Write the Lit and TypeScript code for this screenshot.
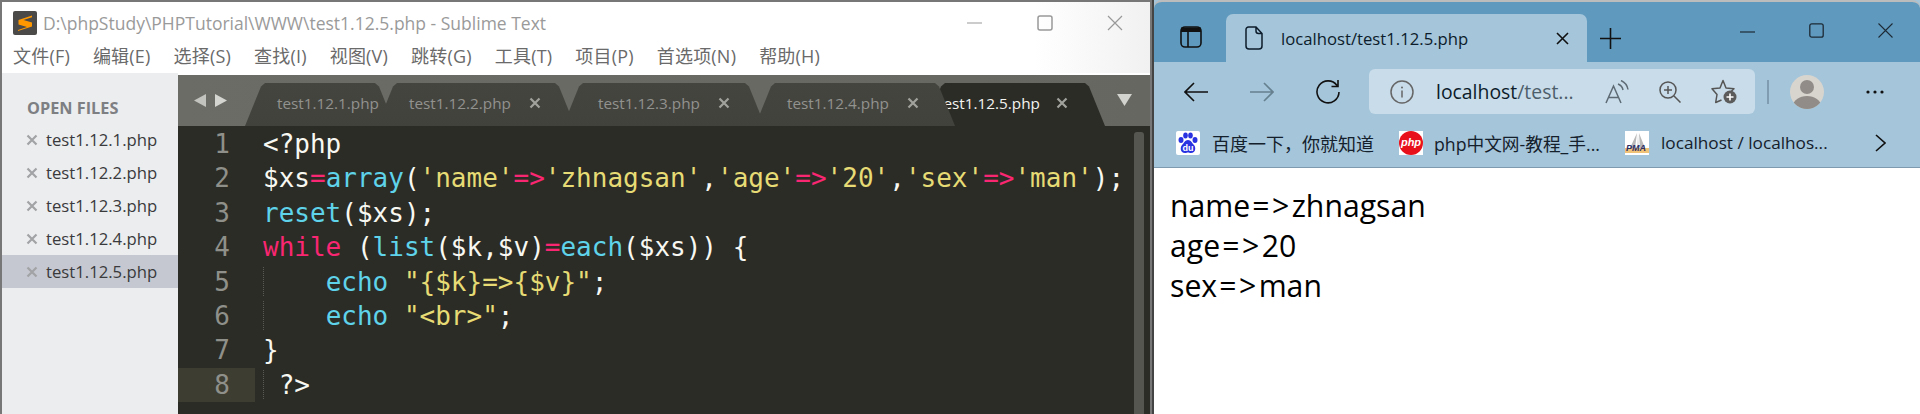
import { LitElement, html, css } from "lit";
import { customElement } from "lit/decorators.js";

const files = ["test1.12.1.php", "test1.12.2.php", "test1.12.3.php", "test1.12.4.php", "test1.12.5.php"];

const x = (size: number, cls = "") => html`<svg class=${cls} width=${size} height=${size} viewBox="0 0 12 12"><path d="M1.5 1.5l9 9M10.5 1.5l-9 9" fill="none" stroke="currentColor" stroke-width="2.2"/></svg>`;

const P = (t: string) => html`<span class="p">${t}</span>`;
const C = (t: string) => html`<span class="c">${t}</span>`;
const Y = (t: string) => html`<span class="y">${t}</span>`;

const code = [
  html`&lt;?php`,
  html`$xs${P("=")}${C("array")}(${Y("'name'")}${P("=>")}${Y("'zhnagsan'")},${Y("'age'")}${P("=>")}${Y("'20'")},${Y("'sex'")}${P("=>")}${Y("'man'")});`,
  html`${C("reset")}($xs);`,
  html`${P("while")} (${C("list")}($k,$v)${P("=")}${C("each")}($xs)) {`,
  html`<span class="guide">    </span>${C("echo")} ${Y('"{$k}=>{$v}"')};`,
  html`<span class="guide">    </span>${C("echo")} ${Y('"<br>"')};`,
  html`}`,
  html`<span class="guide"> </span>?>`,
];

const arrow = html`<span class="arr">=></span>`;

@customElement("app-root")
export class AppRoot extends LitElement {
  static styles = css`
    :host { display: flex; width: 1920px; height: 414px; overflow: hidden; background: #55565a; font-family: "Open Sans", "Noto Sans CJK SC", sans-serif; }
    svg { display: block; flex: none; }

    .sublime { width: 1148px; height: 412px; border-top: 2px solid #777; border-left: 2px solid #777; background: #fff; display: flex; flex-direction: column; flex: none; }
    .title { height: 42px; display: flex; align-items: center; padding-left: 11px; flex: none; background: linear-gradient(90deg, #fff 90%, #f1f1f1 100%); }
    .title-text { margin-left: 6px; font-size: 17.5px; color: #9a9a9a; white-space: nowrap; }
    .win { margin-left: auto; display: flex; gap: 54px; padding-right: 27px; color: #999; }
    .menu { height: 29px; display: flex; align-items: flex-start; padding-left: 11px; gap: 23px; font-size: 18px; letter-spacing: .2px; line-height: 24px; color: #6a6a6a; flex: none; background: linear-gradient(90deg, #fff 90%, #f1f1f1 100%); white-space: nowrap; }
    .main { flex: 1; display: flex; min-height: 0; }

    .side { width: 176px; flex: none; background: #ebedef; display: flex; flex-direction: column; padding-top: 26px; box-sizing: border-box; }
    .side h4 { margin: 0 0 5px 25px; height: 19px; font-size: 16.3px; line-height: 19px; font-weight: 700; color: #7d7f83; }
    .row { height: 33px; display: flex; align-items: center; padding-left: 24px; gap: 8px; font-size: 16.7px; color: #3a3a3c; }
    .row svg { color: #a2a3a5; }
    .row.on { background: #c5c8d0; }

    .ed { flex: 1; min-width: 0; display: flex; flex-direction: column; background: #2b2c26; margin-top: 2px; }
    .tabs { height: 51px; flex: none; box-sizing: border-box; padding: 8px 0 0 16px; display: flex; align-items: flex-start; background: linear-gradient(90deg, #6c6c66, #676761); }
    .arrows { display: flex; gap: 9px; width: 51px; padding-top: 11px; flex: none; }
    .tab { height: 43px; flex: none; box-sizing: border-box; display: flex; align-items: center; background: linear-gradient(#454540, #42423d); color: #92928e; font-size: 15.3px; padding-left: 32px; clip-path: polygon(0 100%, 16px 8%, 20px 0, calc(100% - 20px) 0, calc(100% - 16px) 8%, 100% 100%); white-space: nowrap; padding-bottom: 3px; }
    .tab svg { color: #a2a29d; margin-left: 18px; }
    .t1 { width: 150px; z-index: 1; }
    .t2 { width: 198px; margin-left: -18px; z-index: 2; }
    .t3 { width: 202px; margin-left: -12px; z-index: 3; padding-left: 35px; }
    .t4 { width: 200px; margin-left: -10px; z-index: 4; }
    .t5 { width: 180px; margin-left: -30px; z-index: 3; padding-left: 13px; background: #2b2c26; color: #f4f4f0; }
    .t5 svg { margin-left: 16px; }
    .drop { margin: 11px 0 0 12px; flex: none; }

    .body { flex: 1; display: flex; min-height: 0; }
    .gutter { width: 77px; flex: none; padding-top: 1px; box-sizing: border-box; }
    .num { height: 34.4px; padding-right: 25px; box-sizing: border-box; text-align: right; color: #8f908a; font: 26px/34.4px "DejaVu Sans Mono", monospace; }
    .num.cur { background: #3e3d32; }
    .code { flex: 1; min-width: 0; padding: 1px 0 0 8px; box-sizing: border-box; font: 26px/34.4px "DejaVu Sans Mono", monospace; color: #f8f8f2; white-space: pre; }
    .ln { height: 34.4px; }
    .guide { background: linear-gradient(#5a5a54 50%, transparent 50%) 0 0 / 1px 2px repeat-y; }
    .p { color: #f92672; }
    .c { color: #5fd3ea; }
    .y { color: #e6db74; }
    .thumb { width: 10px; margin: 6px 6px 0 0; border-radius: 3px 3px 0 0; background: #55564f; flex: none; }

    .sep { width: 4px; flex: none; background: linear-gradient(90deg, #777 50%, #444 50%); }

    .edge { flex: 1; min-width: 0; display: flex; flex-direction: column; background: #fff; }
    .strip { height: 62px; flex: none; box-sizing: border-box; border-top: 2px solid #bcbcbc; border-radius: 8px 8px 0 0; background: #5f9abe; display: flex; align-items: flex-end; padding-left: 26px; color: #111; }
    .strip-wrap { background: #a4c5da; }
    .side-ico { margin-bottom: 14px; }
    .etab { margin-left: 24px; width: 361px; height: 48px; box-sizing: border-box; background: #a4c5da; border-radius: 7px 7px 0 0; display: flex; align-items: center; padding: 0 18px 0 19px; font-size: 16.7px; color: #0d1c2b; }
    .etab span { margin-left: 18px; flex: 1; white-space: nowrap; }
    .plus { margin: 0 0 13px 13px; }
    .ewin { margin-left: auto; align-self: flex-start; display: flex; gap: 54px; padding: 21px 27px 0 0; color: #1d2a35; }
    .bar { height: 60px; flex: none; background: #a4c5da; display: flex; align-items: center; padding-left: 30px; color: #111; }
    .forward { margin-left: 42px; }
    .reload { margin-left: 42px; }
    .addr { margin-left: 29px; width: 386px; height: 45px; margin-top: -1px; box-sizing: border-box; background: #c8dce9; border-radius: 6px; display: flex; align-items: center; padding: 0 18px 0 21px; font-size: 19.4px; color: #0d1c2b; }
    .addr .host { margin-left: 22px; white-space: nowrap; }
    .addr .rest { color: #4d5e6b; }
    .addr .read { margin-left: auto; }
    .addr .zoom { margin-left: 30px; }
    .addr .star { margin-left: 30px; }
    .divider { width: 2px; height: 24px; margin-left: 12px; background: #7f9cb1; flex: none; }
    .avatar { margin-left: 21px; }
    .dots { margin-left: 42px; }
    .marks { height: 46px; flex: none; box-sizing: border-box; border-bottom: 1px solid #7d9aae; background: #a4c5da; display: flex; align-items: center; padding: 0 0 4px 22px; font-size: 18px; color: #14202b; white-space: nowrap; }
    .marks .txt { margin-left: 12px; }
    .marks .cn { font-size: 17.7px; margin-left: 11px; }
    .marks .lat { font-size: 17.2px; }
    .m2 { margin-left: 25px; }
    .chev { margin-left: auto; margin-right: 34px; }
    .page { flex: 1; padding: 18px 0 0 16px; font-size: 30.2px; line-height: 40px; color: #000; }
    .arr { letter-spacing: 2.5px; margin-left: 2px; }
    .fav { width: 24px; height: 24px; flex: none; position: relative; background: #fff; border-radius: 2px; overflow: hidden; }
    .square { border-radius: 0; }
    .du { position: absolute; left: 0; right: 0; bottom: 2px; text-align: center; font: 700 9px/10px "Liberation Sans", sans-serif; color: #fff; }
    .phpico { position: absolute; inset: 0; text-align: center; font: italic 700 11px/23px "Liberation Sans", sans-serif; color: #fff; }
    .pma { position: absolute; left: 1px; bottom: 2px; font: italic 900 9px/9px "Liberation Sans", sans-serif; color: #2d2f66; letter-spacing: 0; }
  `;

  render() {
    return html`
      <div class="sublime">
        <div class="title">
          <svg width="24" height="24" viewBox="0 0 24 24"><rect width="24" height="24" rx="2" fill="#4b4a48"/><path d="M19 4.500L5.500 9v4.600L14 16l-9 3v1l14-4.600V11.500L10.500 9 19 6.200z" fill="#ff9800"/></svg>
          <span class="title-text">D:\\phpStudy\\PHPTutorial\\WWW\\test1.12.5.php - Sublime Text</span>
          <div class="win">
            <svg width="16" height="16" viewBox="0 0 16 16"><path d="M0 8h15" stroke="currentColor" stroke-width="1"/></svg>
            <svg width="16" height="16" viewBox="0 0 16 16"><rect x="1" y="1" width="14" height="14" rx="2" fill="none" stroke="currentColor" stroke-width="1.500"/></svg>
            <svg width="16" height="16" viewBox="0 0 16 16"><path d="M1 1l14 14M15 1L1 15" stroke="currentColor" stroke-width="1.200"/></svg>
          </div>
        </div>
        <div class="menu">
          ${["文件(F)", "编辑(E)", "选择(S)", "查找(I)", "视图(V)", "跳转(G)", "工具(T)", "项目(P)", "首选项(N)", "帮助(H)"].map((m) => html`<span>${m}</span>`)}
        </div>
        <div class="main">
          <div class="side">
            <h4>OPEN FILES</h4>
            ${files.map((f, i) => html`<div class="row ${i === 4 ? "on" : ""}">${x(12)}<span>${f}</span></div>`)}
          </div>
          <div class="ed">
            <div class="tabs">
              <div class="arrows">
                <svg width="12" height="13" viewBox="0 0 12 13"><path d="M12 0v13L0 6.500z" fill="#c2c2be"/></svg>
                <svg width="12" height="13" viewBox="0 0 12 13"><path d="M0 0v13l12-6.500z" fill="#d4d4d0"/></svg>
              </div>
              <div class="tab t1"><span>test1.12.1.php</span></div>
              <div class="tab t2"><span>test1.12.2.php</span>${x(12)}</div>
              <div class="tab t3"><span>test1.12.3.php</span>${x(12)}</div>
              <div class="tab t4"><span>test1.12.4.php</span>${x(12)}</div>
              <div class="tab t5"><span>test1.12.5.php</span>${x(12)}</div>
              <svg class="drop" width="15" height="12" viewBox="0 0 15 12"><path d="M0 0h15L7.500 12z" fill="#d2d2ce"/></svg>
            </div>
            <div class="body">
              <div class="gutter">
                ${code.map((_, i) => html`<div class="num ${i === 7 ? "cur" : ""}">${i + 1}</div>`)}
              </div>
              <div class="code">${code.map((l) => html`<div class="ln">${l}</div>`)}</div>
              <div class="thumb"></div>
            </div>
          </div>
        </div>
      </div>
      <div class="sep"></div>
      <div class="edge">
        <div class="strip-wrap">
          <div class="strip">
            <svg class="side-ico" width="22" height="22" viewBox="0 0 22 22"><rect x="1" y="1" width="20" height="20" rx="4" fill="none" stroke="currentColor" stroke-width="1.600"/><path d="M1 1.500h20V6H1z" fill="currentColor"/><path d="M8 6v15" stroke="currentColor" stroke-width="1.600"/></svg>
            <div class="etab">
              <svg width="18" height="24" viewBox="0 0 18 24"><path d="M3.500 1H11l6 6.500V20a3 3 0 0 1-3 3H4a3 3 0 0 1-3-3V3.500A2.500 2.500 0 0 1 3.500 1zM11 1v4a2.500 2.500 0 0 0 2.500 2.500H17" fill="none" stroke="currentColor" stroke-width="1.500"/></svg>
              <span>localhost/test1.12.5.php</span>
              <svg width="13" height="13" viewBox="0 0 13 13"><path d="M1 1l11 11M12 1L1 12" stroke="#111" stroke-width="1.600"/></svg>
            </div>
            <svg class="plus" width="21" height="21" viewBox="0 0 21 21"><path d="M10.500 0v21M0 10.500h21" stroke="#111" stroke-width="1.600"/></svg>
            <div class="ewin">
              <svg width="15" height="15" viewBox="0 0 15 15"><path d="M0 9h15" stroke="currentColor" stroke-width="1.200"/></svg>
              <svg width="15" height="15" viewBox="0 0 15 15"><rect x=".8" y=".8" width="13.400" height="13.400" rx="2" fill="none" stroke="currentColor" stroke-width="1.300"/></svg>
              <svg width="15" height="15" viewBox="0 0 15 15"><path d="M.5.500l14 14M14.500.500l-14 14" stroke="currentColor" stroke-width="1.100"/></svg>
            </div>
          </div>
        </div>
        <div class="bar">
          <svg width="24" height="20" viewBox="0 0 24 20"><path d="M24 10H1M10 1l-9 9 9 9" fill="none" stroke="#111" stroke-width="1.600"/></svg>
          <svg class="forward" width="24" height="20" viewBox="0 0 24 20"><path d="M0 10h23M14 1l9 9-9 9" fill="none" stroke="#66808f" stroke-width="1.600"/></svg>
          <svg class="reload" width="24" height="24" viewBox="0 0 24 24"><path d="M21 5.500A11 11 0 1 0 23 12M22 0v6.500h-6.500" fill="none" stroke="#111" stroke-width="1.600"/></svg>
          <div class="addr">
            <svg width="24" height="24" viewBox="0 0 24 24"><circle cx="12" cy="12" r="11" fill="none" stroke="#666" stroke-width="1.500"/><path d="M12 10.500v7" stroke="#666" stroke-width="1.500"/><circle cx="12" cy="7.500" r="1" fill="#666"/></svg>
            <span class="host">localhost<span class="rest">/test...</span></span>
            <svg class="read" width="24" height="24" viewBox="0 0 24 24"><path d="M1 23L8.500 6 16 23M3.500 17.500h10M13 4a8 8 0 0 1 5 6M16 .5a12 12 0 0 1 7 9" fill="none" stroke="#5d6a74" stroke-width="1.500"/></svg>
            <svg class="zoom" width="22" height="22" viewBox="0 0 22 22"><circle cx="9" cy="9" r="8" fill="none" stroke="#555" stroke-width="1.500"/><path d="M15 15l6.500 6.500M5 9h8M9 5v8" stroke="#555" stroke-width="1.500"/></svg>
            <svg class="star" width="26" height="25" viewBox="0 0 26 25"><path d="M10.500 21l-5.800 2.500 1.300-8L1 9.700 9 9l3-7.500L15 9l8 .7-4 3.800" fill="none" stroke="#555" stroke-width="1.500" stroke-linejoin="round"/><circle cx="19" cy="18" r="6.500" fill="#5b5b5b"/><path d="M19 14.500v7M15.500 18h7" stroke="#fff" stroke-width="1.600"/></svg>
          </div>
          <div class="divider"></div>
          <svg class="avatar" width="34" height="34" viewBox="0 0 34 34"><defs><clipPath id="av"><circle cx="17" cy="17" r="17"/></clipPath></defs><circle cx="17" cy="17" r="17" fill="#d8d5cf"/><g clip-path="url(#av)" fill="#918c87"><circle cx="17" cy="12" r="7"/><ellipse cx="17" cy="31" rx="14" ry="10"/></g></svg>
          <svg class="dots" width="18" height="4" viewBox="0 0 18 4"><g fill="#111"><circle cx="2" cy="2" r="1.600"/><circle cx="9" cy="2" r="1.600"/><circle cx="16" cy="2" r="1.600"/></g></svg>
        </div>
        <div class="marks">
          <div class="fav">
            <svg width="24" height="24" viewBox="0 0 24 24"><g fill="#2932e1"><ellipse cx="5" cy="9" rx="2.500" ry="3"/><ellipse cx="9.500" cy="4.500" rx="2.300" ry="3"/><ellipse cx="14.500" cy="4.500" rx="2.300" ry="3"/><ellipse cx="19" cy="9" rx="2.500" ry="3"/><path d="M12 9c3 0 4 3 6 5s2 8-3 8c-1.500 0-2-.5-3-.5s-1.500.5-3 .5c-5 0-5-6-3-8s3-5 6-5z"/></g></svg>
            <span class="du">du</span>
          </div>
          <span class="txt">百度一下，你就知道</span>
          <div class="fav square m2">
            <svg width="24" height="24" viewBox="0 0 24 24"><circle cx="12" cy="12" r="12" fill="#e8101a"/></svg>
            <span class="phpico">php</span>
          </div>
          <span class="txt cn">php中文网-教程_手...</span>
          <div class="fav square m2">
            <svg width="24" height="24" viewBox="0 0 24 24"><path d="M12 2L5 17h5zM14 2l6 15h-5z" fill="#b9b9b9"/><path d="M13 2l-1 15h2z" fill="#ddd"/><path d="M0 17h24v5H0z" fill="#e59a1e" opacity=".6"/></svg>
            <span class="pma">PMA</span>
          </div>
          <span class="txt lat">localhost / localhos...</span>
          <svg class="chev" width="11" height="18" viewBox="0 0 11 18"><path d="M1 1l9 8-9 8" fill="none" stroke="#111" stroke-width="1.600"/></svg>
        </div>
        <div class="page">name${arrow}zhnagsan<br>age${arrow}20<br>sex${arrow}man</div>
      </div>
    `;
  }
}
